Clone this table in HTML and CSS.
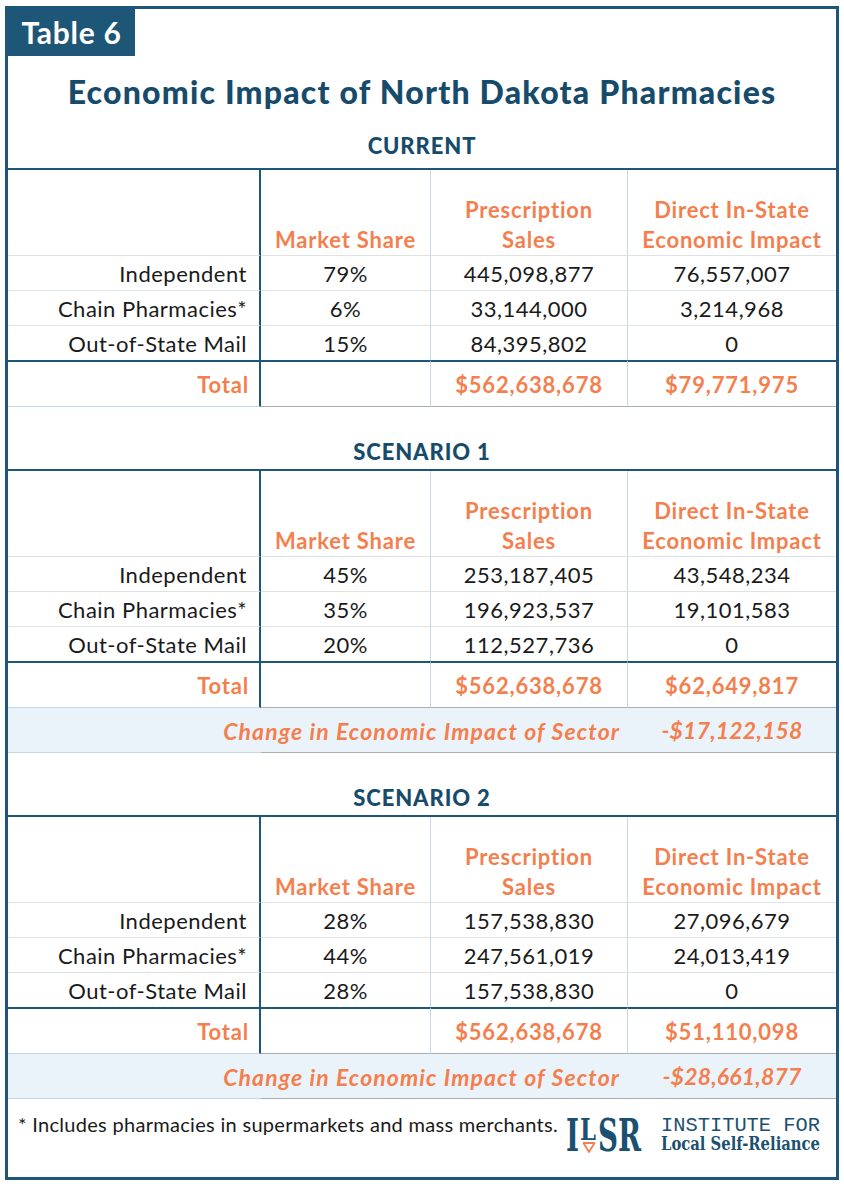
FILE: index.html
```html
<!DOCTYPE html>
<html lang="en">
<head>
<meta charset="utf-8">
<title>Table 6 – Economic Impact of North Dakota Pharmacies</title>
<link rel="stylesheet" href="styles.css">
</head>
<body>
<div class="frame">
  <div class="badge">Table 6</div>
  <h1 class="title">Economic Impact of North Dakota Pharmacies</h1>

  <h2 class="scenario first">CURRENT</h2>
  <div class="grid">
    <div class="c lbl hd"></div>
    <div class="c hd mid">Market Share</div>
    <div class="c hd mid">Prescription<br>Sales</div>
    <div class="c hd">Direct In-State<br>Economic Impact</div>

    <div class="c lbl row">Independent</div>
    <div class="c row mid">79%</div>
    <div class="c row mid">445,098,877</div>
    <div class="c row">76,557,007</div>

    <div class="c lbl row">Chain Pharmacies*</div>
    <div class="c row mid">6%</div>
    <div class="c row mid">33,144,000</div>
    <div class="c row">3,214,968</div>

    <div class="c lbl row last">Out-of-State Mail</div>
    <div class="c row last mid">15%</div>
    <div class="c row last mid">84,395,802</div>
    <div class="c row last">0</div>

    <div class="c lbl tot">Total</div>
    <div class="c tot mid"></div>
    <div class="c tot mid">$562,638,678</div>
    <div class="c tot">$79,771,975</div>
  </div>

  <h2 class="scenario">SCENARIO 1</h2>
  <div class="grid">
    <div class="c lbl hd"></div>
    <div class="c hd mid">Market Share</div>
    <div class="c hd mid">Prescription<br>Sales</div>
    <div class="c hd">Direct In-State<br>Economic Impact</div>

    <div class="c lbl row">Independent</div>
    <div class="c row mid">45%</div>
    <div class="c row mid">253,187,405</div>
    <div class="c row">43,548,234</div>

    <div class="c lbl row">Chain Pharmacies*</div>
    <div class="c row mid">35%</div>
    <div class="c row mid">196,923,537</div>
    <div class="c row">19,101,583</div>

    <div class="c lbl row last">Out-of-State Mail</div>
    <div class="c row last mid">20%</div>
    <div class="c row last mid">112,527,736</div>
    <div class="c row last">0</div>

    <div class="c lbl tot">Total</div>
    <div class="c tot mid"></div>
    <div class="c tot mid">$562,638,678</div>
    <div class="c tot">$62,649,817</div>

    <div class="c chg-label">Change in Economic Impact of Sector</div>
    <div class="c chg-val">-$17,122,158</div>
  </div>

  <h2 class="scenario">SCENARIO 2</h2>
  <div class="grid">
    <div class="c lbl hd"></div>
    <div class="c hd mid">Market Share</div>
    <div class="c hd mid">Prescription<br>Sales</div>
    <div class="c hd">Direct In-State<br>Economic Impact</div>

    <div class="c lbl row">Independent</div>
    <div class="c row mid">28%</div>
    <div class="c row mid">157,538,830</div>
    <div class="c row">27,096,679</div>

    <div class="c lbl row">Chain Pharmacies*</div>
    <div class="c row mid">44%</div>
    <div class="c row mid">247,561,019</div>
    <div class="c row">24,013,419</div>

    <div class="c lbl row last">Out-of-State Mail</div>
    <div class="c row last mid">28%</div>
    <div class="c row last mid">157,538,830</div>
    <div class="c row last">0</div>

    <div class="c lbl tot">Total</div>
    <div class="c tot mid"></div>
    <div class="c tot mid">$562,638,678</div>
    <div class="c tot">$51,110,098</div>

    <div class="c chg-label">Change in Economic Impact of Sector</div>
    <div class="c chg-val">-$28,661,877</div>
  </div>

  <div class="footer">
    <p class="note">* Includes pharmacies in supermarkets and mass merchants.</p>
    <svg class="logo" width="256" height="54" viewBox="0 -10 256 54" aria-label="ILSR Institute for Local Self-Reliance">
      <text x="0" y="37" class="lg-mark" font-size="45" textLength="13" lengthAdjust="spacingAndGlyphs">I</text>
      <text x="14" y="26" class="lg-mark" font-size="30" textLength="16" lengthAdjust="spacingAndGlyphs">L</text>
      <polygon points="17.5,29 28.5,29 23,38" fill="#fff" stroke="#f0804f" stroke-width="1.8" stroke-linejoin="round"/>
      <text x="32" y="37" class="lg-mark" font-size="45" textLength="43" lengthAdjust="spacingAndGlyphs">SR</text>
      <text x="95" y="17" class="lg-top" font-size="20" textLength="159" lengthAdjust="spacingAndGlyphs">INSTITUTE FOR</text>
      <text x="95" y="36" class="lg-bot" font-size="19" textLength="159" lengthAdjust="spacingAndGlyphs">Local Self-Reliance</text>
    </svg>
  </div>
</div>
</body>
</html>
```

FILE: styles.css
```css
* { box-sizing: border-box; }

body {
  margin: 0;
  background: #ffffff;
  font-family: Lato, "Noto Sans", "DejaVu Sans", sans-serif;
  color: #1a1a1a;
}

.frame {
  margin: 6px 0 0 5px;
  width: 834px;
  height: 1174px;
  border: 3px solid #1e5677;
  display: flex;
  flex-direction: column;
}

.badge {
  width: 127px;
  height: 47px;
  background: #1e5677;
  color: #ffffff;
  font-weight: 700;
  font-size: 30px;
  letter-spacing: 0.7px;
  line-height: 47px;
  text-align: center;
}

.title {
  margin: 16px 0 0;
  text-align: center;
  font-size: 32px;
  letter-spacing: 1.2px;
  line-height: 40px;
  font-weight: 900;
  color: #174b6b;
}

.scenario {
  margin: 0;
  padding: 33px 0 5px;
  text-align: center;
  font-size: 22px;
  letter-spacing: 0.9px;
  line-height: 24px;
  font-weight: 900;
  color: #174b6b;
}

.scenario.first {
  padding: 22px 0 10px;
}

.grid {
  display: grid;
  grid-template-columns: 253px 170px 197px 1fr;
  border-top: 2px solid #1e5677;
}

.c {
  display: flex;
  align-items: center;
  justify-content: center;
  text-align: center;
  font-size: 22px;
  letter-spacing: 0.5px;
  white-space: nowrap;
}

.mid {
  border-right: 1px solid #c9d7e1;
}

.lbl {
  justify-content: flex-end;
  padding-right: 12px;
  border-right: 2px solid #1e5677;
}

.hd {
  height: 86px;
  align-items: flex-end;
  line-height: 30px;
  font-weight: 700;
  letter-spacing: 0.8px;
  color: #f47f4e;
  border-bottom: 1px solid #dde3e7;
}

.row {
  height: 35px;
  border-bottom: 1px solid #dde3e7;
}

.row.last {
  height: 34px;
  border-bottom: none;
}

.tot {
  height: 47px;
  border-top: 2px solid #1e5677;
  border-bottom: 1px solid #a9aeb3;
  font-weight: 700;
  letter-spacing: 0.8px;
  color: #f47f4e;
}

.lbl.tot {
  padding-right: 10px;
  border-bottom-color: #c6d6e2;
}

.chg-label,
.chg-val {
  height: 45px;
  background: #eaf3fa;
  font-size: 23px;
  font-weight: 700;
  font-style: italic;
  letter-spacing: 0.2px;
  color: #f47f4e;
  border-bottom: 1px solid #a9aeb3;
}

.chg-label {
  grid-column: 1 / 4;
  justify-content: flex-end;
  padding-right: 8px;
  letter-spacing: 1.1px;
  border-bottom: none;
  background-image: linear-gradient(to right, #c6d6e2 253px, #a9aeb3 253px);
  background-size: 100% 1px;
  background-position: bottom;
  background-repeat: no-repeat;
}

.footer {
  display: flex;
  align-items: flex-start;
  justify-content: space-between;
  padding: 0 14px 0 10px;
}

.note {
  margin: 13px 0 0;
  font-size: 20px;
  letter-spacing: 0.3px;
  line-height: 24px;
  color: #1a1a1a;
}

.logo {
  margin-top: 5px;
  display: block;
}

.lg-mark {
  font-family: "DejaVu Serif", "Liberation Serif", serif;
  font-weight: 700;
  fill: #1b5070;
}

.lg-top {
  font-family: "Liberation Mono", "DejaVu Sans Mono", monospace;
  fill: #1b5070;
}

.lg-bot {
  font-family: "DejaVu Serif", "Liberation Serif", serif;
  font-weight: 700;
  fill: #1b5070;
}
```
